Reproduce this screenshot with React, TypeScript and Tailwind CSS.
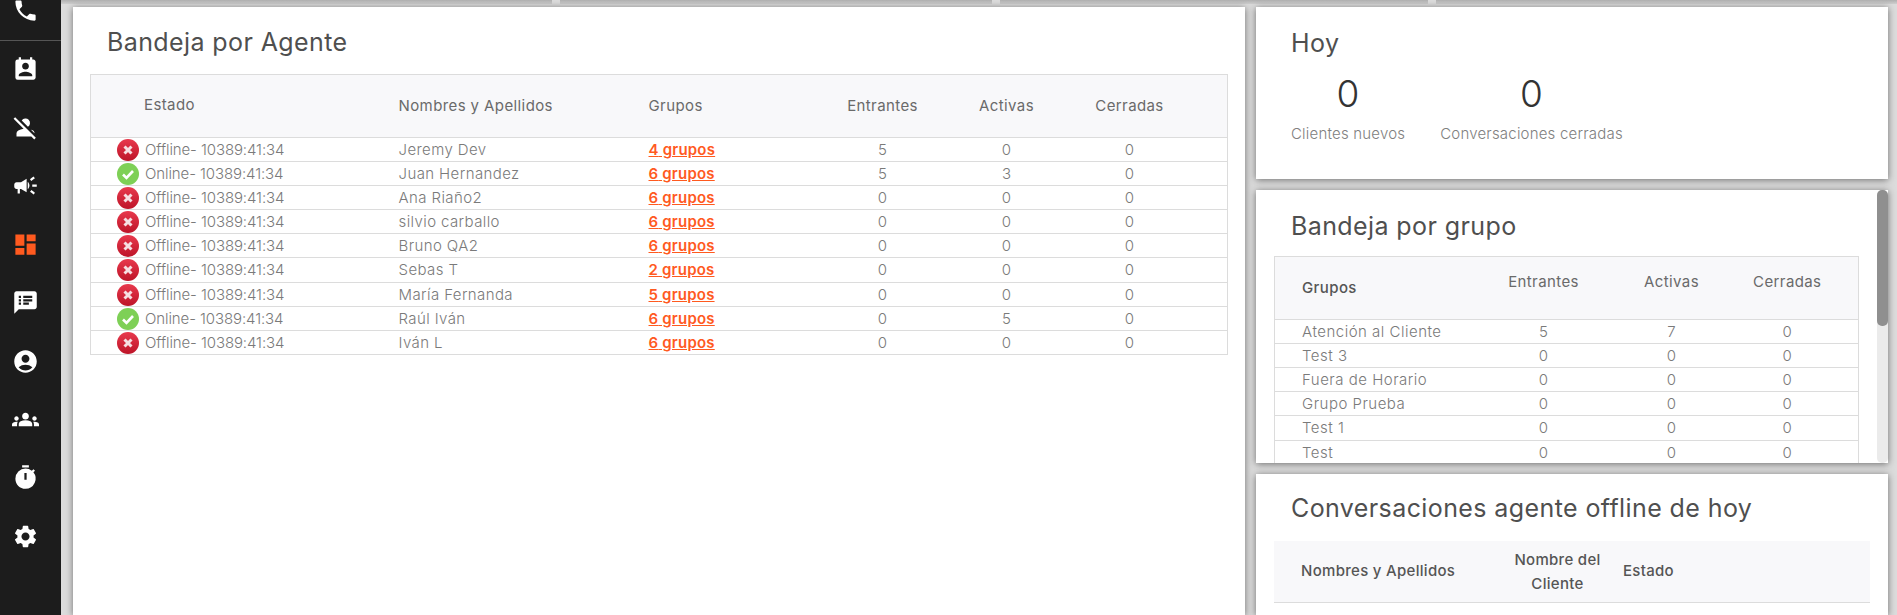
import { MdPhone, MdPermContactCalendar, MdPersonOff, MdCampaign, MdDashboard, MdSpeakerNotes, MdAccountCircle, MdGroups, MdTimer, MdSettings } from 'react-icons/md';

const font = 'font-["Inter","Noto_Sans",sans-serif]';
const card = 'bg-white shadow-[0_1px_7px_rgba(0,0,0,0.5)]';
const title = 'text-[25px] leading-[30px] font-normal tracking-[0.4px] text-[#4f4f4f]';

const agents = [
  { online: false, name: 'Jeremy Dev', groups: 4, inc: 5, act: 0 },
  { online: true, name: 'Juan Hernandez', groups: 6, inc: 5, act: 3 },
  { online: false, name: 'Ana Riaño2', groups: 6, inc: 0, act: 0 },
  { online: false, name: 'silvio carballo', groups: 6, inc: 0, act: 0 },
  { online: false, name: 'Bruno QA2', groups: 6, inc: 0, act: 0 },
  { online: false, name: 'Sebas T', groups: 2, inc: 0, act: 0 },
  { online: false, name: 'María Fernanda', groups: 5, inc: 0, act: 0 },
  { online: true, name: 'Raúl Iván', groups: 6, inc: 0, act: 5 },
  { online: false, name: 'Iván L', groups: 6, inc: 0, act: 0 },
];

const groupRows = [
  ['Atención al Cliente', 5, 7, 0],
  ['Test 3', 0, 0, 0],
  ['Fuera de Horario', 0, 0, 0],
  ['Grupo Prueba', 0, 0, 0],
  ['Test 1', 0, 0, 0],
  ['Test', 0, 0, 0],
];

const navIcons = [MdPermContactCalendar, MdPersonOff, MdCampaign, MdDashboard, MdSpeakerNotes, MdAccountCircle, MdGroups, MdTimer, MdSettings];

function StatusIcon({ online }: { online: boolean }) {
  if (online) {
    return (
      <svg viewBox="0 0 22 22" className="w-[22px] h-[22px] shrink-0">
        <circle cx="11" cy="11" r="11" fill="#7ed056" />
        <path d="M6 11.5l3.5 3.5L16 8" fill="none" stroke="#fff" strokeWidth="2.6" />
      </svg>
    );
  }
  return (
    <svg viewBox="0 0 22 22" className="w-[22px] h-[22px] shrink-0">
      <defs>
        <linearGradient id="off" x1="0" y1="0" x2="0" y2="1">
          <stop offset="0" stopColor="#e8394d" />
          <stop offset="1" stopColor="#bd1428" />
        </linearGradient>
      </defs>
      <circle cx="11" cy="11" r="11" fill="url(#off)" />
      <path d="M7.5 7.5l7 7M14.5 7.5l-7 7" fill="none" stroke="#f6dfe2" strokeWidth="3" />
    </svg>
  );
}

function Sidebar() {
  return (
    <aside className="w-[61px] shrink-0 bg-[#1c1c1c] text-white">
      <div className="h-[41px] border-b border-[#555] flex justify-center overflow-hidden pr-[11px]">
        <MdPhone className="text-[27px] -mt-[3px]" />
      </div>
      <div className="-mt-[1px]">
        {navIcons.map((Icon, i) => (
          <div key={i} className="h-[58.4px] flex items-center justify-center pr-[11px]">
            <Icon className={i === 3 ? 'text-[27px] text-[#ff5a1f]' : 'text-[27px]'} />
          </div>
        ))}
      </div>
    </aside>
  );
}

function AgentTable() {
  return (
    <table className="w-[1137px] table-fixed border-collapse border border-[#dcdcdc] text-[15px] leading-[22px] font-light text-[#7a7a7a]">
      <colgroup>
        <col className="w-[292px]" />
        <col className="w-[250px]" />
        <col className="w-[168px]" />
        <col className="w-[164px]" />
        <col className="w-[84px]" />
        <col className="w-[162px]" />
        <col className="w-[17px]" />
      </colgroup>
      <thead>
        <tr className="h-[63px] bg-[#f8f8fa] border-b border-[#dcdcdc] text-[#6a6a6a] tracking-[0.4px]">
          <th className="pl-[53px] pb-[2px] text-left font-normal">Estado</th>
          <th className="pl-[16px] text-left font-normal">Nombres y Apellidos</th>
          <th className="pl-[16px] text-left font-normal">Grupos</th>
          <th className="font-normal">Entrantes</th>
          <th className="font-normal">Activas</th>
          <th className="font-normal">Cerradas</th>
          <th />
        </tr>
      </thead>
      <tbody>
        {agents.map((a, i) => (
          <tr key={i} className={i === 5 ? 'h-[25px] border-b border-[#dcdcdc]' : 'h-[24px] border-b border-[#dcdcdc]'}>
            <td className="pl-[26px] py-0">
              <div className="flex items-center gap-[6px]">
                <StatusIcon online={a.online} />
                <span className="tracking-[-0.1px]">{a.online ? 'Online' : 'Offline'}- 10389:41:34</span>
              </div>
            </td>
            <td className="pl-[16px] py-0 tracking-[0.4px]">{a.name}</td>
            <td className="pl-[16px] py-0">
              <a className="font-semibold tracking-[0.2px] text-[#ff5a1f] underline">{a.groups} grupos</a>
            </td>
            <td className="text-center py-0">{a.inc}</td>
            <td className="text-center py-0">{a.act}</td>
            <td className="text-center py-0">0</td>
            <td />
          </tr>
        ))}
      </tbody>
    </table>
  );
}

function GroupTable() {
  return (
    <table className="w-[584px] table-fixed border-collapse border border-[#dcdcdc] text-[15px] leading-[22px] font-light text-[#7a7a7a]">
      <colgroup>
        <col className="w-[186px]" />
        <col className="w-[166px]" />
        <col className="w-[90px]" />
        <col className="w-[142px]" />
      </colgroup>
      <thead>
        <tr className="h-[63px] bg-[#f8f8fa] border-b border-[#dcdcdc] text-[#6a6a6a] tracking-[0.4px]">
          <th className="pl-[27px] text-left font-medium text-[#555]">Grupos</th>
          <th className="font-normal pb-[12px]">Entrantes</th>
          <th className="font-normal pb-[12px]">Activas</th>
          <th className="font-normal pb-[12px]">Cerradas</th>
        </tr>
      </thead>
      <tbody>
        {groupRows.map((r, i) => (
          <tr key={i} className={i === 4 ? 'h-[25px] border-b border-[#dcdcdc]' : 'h-[24px] border-b border-[#dcdcdc]'}>
            <td className="pl-[27px] py-0 tracking-[0.5px] whitespace-nowrap">{r[0]}</td>
            <td className="text-center py-0">{r[1]}</td>
            <td className="text-center py-0">{r[2]}</td>
            <td className="text-center py-0">{r[3]}</td>
          </tr>
        ))}
      </tbody>
    </table>
  );
}

export default function App() {
  return (
    <div className={`flex h-[615px] overflow-hidden bg-[#dcdcdc] ${font}`}>
      <Sidebar />
      <div className="flex-1 flex flex-col">
        {/* bottom edge of the row of cards that is scrolled out above */}
        <div className="h-[4px] mb-[3px] flex gap-[8px]">
          <div className="w-[491px] bg-gradient-to-b from-[#b0b0b0] to-[#cfcfcf]" />
          <div className="w-[432px] bg-gradient-to-b from-[#b0b0b0] to-[#cfcfcf]" />
          <div className="w-[428px] bg-gradient-to-b from-[#b0b0b0] to-[#cfcfcf]" />
          <div className="flex-1 bg-gradient-to-b from-[#b0b0b0] to-[#cfcfcf]" />
        </div>
        <main className="flex-1 flex gap-[11px] pl-[12px] pr-[9px] min-h-0">
          <section className={`w-[1172px] ${card} pl-[17px] pt-[20px]`}>
            <h2 className={`${title} mb-[17px] pl-[17px]`}>Bandeja por Agente</h2>
            <AgentTable />
          </section>
          <div className="w-[632px] flex flex-col gap-[11px]">
            <section className={`h-[172px] ${card} pl-[35px] pt-[21px]`}>
              <h2 className={title}>Hoy</h2>
              <div className="flex gap-[35px] mt-[11px] text-[15px] font-light tracking-[0.2px] text-[#808080]">
                <div className="text-center">
                  <div className="text-[37px] leading-[50px] text-[#333]">0</div>
                  <div className="mt-[4px]">Clientes nuevos</div>
                </div>
                <div className="text-center">
                  <div className="text-[37px] leading-[50px] text-[#333]">0</div>
                  <div className="mt-[4px]">Conversaciones cerradas</div>
                </div>
              </div>
            </section>
            <section className={`relative h-[273px] overflow-hidden ${card} pl-[18px] pt-[21px]`}>
              <h2 className={`${title} mb-[15px] pl-[17px]`}>Bandeja por grupo</h2>
              <GroupTable />
              <div className="absolute right-0 top-0 bottom-0 w-[11px] bg-[#ebebeb] rounded-[5px]">
                <div className="h-[136px] bg-[#8f8f8f] rounded-[5px]" />
              </div>
            </section>
            <section className={`flex-1 ${card} px-[18px] pt-[19px]`}>
              <h2 className={`${title} mb-[18px] pl-[17px]`}>Conversaciones agente offline de hoy</h2>
              <div className="h-[62px] flex items-center bg-[#f8f8fa] border-b border-[#dcdcdc] text-[15px] font-medium tracking-[0.3px] text-[#555]">
                <div className="w-[236px] pl-[27px]">Nombres y Apellidos</div>
                <div className="w-[95px] text-center leading-[24px]">Nombre del Cliente</div>
                <div className="pl-[18px]">Estado</div>
              </div>
            </section>
          </div>
        </main>
      </div>
    </div>
  );
}
